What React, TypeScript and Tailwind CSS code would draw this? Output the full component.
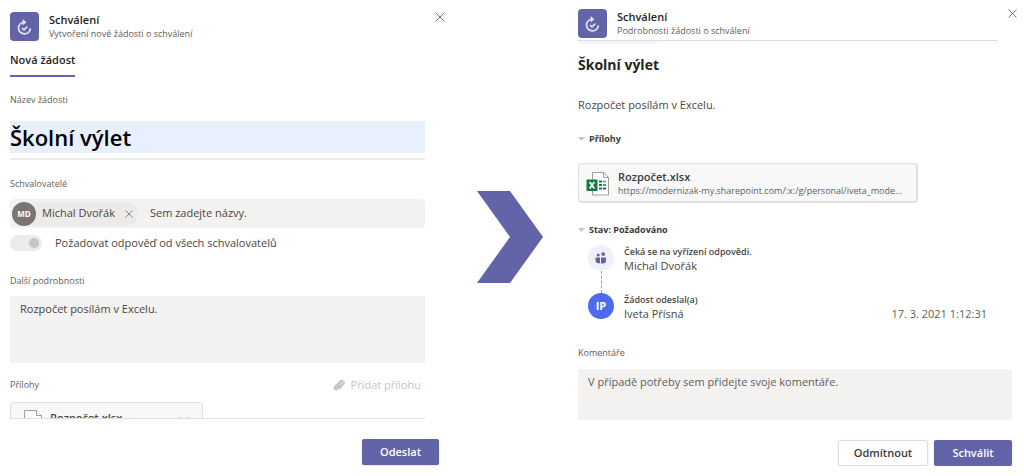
import React, { useState } from 'react';

const LogoIcon: React.FC = () => (
  <span className="flex h-[29px] w-[29px] shrink-0 items-center justify-center rounded-sm bg-[#6264a7]">
    <svg width="16" height="18" viewBox="0 0 16 18" fill="none" stroke="#e2e2f6" strokeWidth="1.7">
      <path d="M7.2 4.4C4 4.4 1.5 6.8 1.5 10c0 3.3 2.6 5.9 5.9 5.9 3.2 0 5.7-2.4 6-5.5" />
      <path d="M5.6 1 9.4 4.3 5.6 7.4z" fill="#e2e2f6" stroke="none" />
      <path d="m5 10 2 1.900 3.400-3.300" strokeWidth="1.5" />
    </svg>
  </span>
);

const CloseIcon: React.FC<{ size: number }> = ({ size }) => (
  <svg width={size} height={size} viewBox="0 0 10 10" stroke="#605e5c" strokeWidth="0.9">
    <path d="M0.5 0.5 9.5 9.5M9.5 0.5 0.5 9.5" />
  </svg>
);

const ExcelIcon: React.FC = () => (
  <svg width="24" height="24" viewBox="0 0 24 24" className="shrink-0">
    <path d="M6.5 0.5h11l5 5v17.5h-16z" fill="#fff" stroke="#a19f9d" />
    <path d="M17.5 0.5v5h5" fill="none" stroke="#a19f9d" />
    <path d="M13 9.5h3M13 13h3M13 16.5h3" stroke="#107c41" strokeWidth="1.8" />
    <path d="M17 9.5h3" stroke="#33c481" strokeWidth="1.8" />
    <path d="M17 13h3" stroke="#21a366" strokeWidth="1.8" />
    <path d="M17 16.5h3" stroke="#185c37" strokeWidth="1.8" />
    <rect x="0.5" y="7.5" width="11" height="11.5" rx="0.8" fill="#107c41" />
    <path d="m3.7 10 4.6 6.5M8.3 10l-4.6 6.5" stroke="#fff" strokeWidth="1.7" />
  </svg>
);

const FileIcon: React.FC = () => (
  <svg width="18" height="22" viewBox="0 0 18 22" fill="#fff" stroke="#a19f9d" className="shrink-0">
    <path d="M0.5 0.5h12l5 5v16h-17z" />
    <path d="M12.5 0.5v5h5" />
  </svg>
);

const ClipIcon: React.FC = () => (
  <svg width="12" height="12" viewBox="0 0 12 12" fill="none" stroke="#c8c6c4" strokeLinecap="round">
    <path d="M3.2 8.8 7.8 4.2" strokeWidth="5" />
    <path d="M2.5 7.5 7.5 2a2.2 2.2 0 0 1 3.2 3L6 10" strokeWidth="1.2" />
    <path d="m7 5.5 1.7-1.9" stroke="#fff" strokeWidth="0.9" />
  </svg>
);

const PeopleIcon: React.FC = () => (
  <svg width="12" height="12" viewBox="0 0 12 12" fill="#6264a7">
    <circle cx="3.2" cy="2.9" r="1.5" />
    <circle cx="8.2" cy="2.1" r="1.9" />
    <path d="M0.5 5.4h4.5v5.9H3.5a3 3 0 0 1-3-3z" />
    <path d="M6 5.4h5v3a3 3 0 0 1-3 3H6z" />
  </svg>
);

interface HeaderProps {
  title: string;
  subtitle: string;
}

const Header: React.FC<HeaderProps> = ({ title, subtitle }) => (
  <header className="flex gap-[10px]">
    <LogoIcon />
    <div>
      <h1 className="text-[11px] leading-[15px] font-semibold text-[#252423]">{title}</h1>
      <p className="text-[9px] leading-[14px] text-[#605e5c]">{subtitle}</p>
    </div>
  </header>
);

const RequestForm: React.FC = () => {
  const [name, setName] = useState('Školní výlet');
  const [details, setDetails] = useState('Rozpočet posílám v Excelu.');
  const [approver, setApprover] = useState('');
  const [requireAll, setRequireAll] = useState(true);

  return (
    <section className="pt-3 pl-[10px]">
      <div className="flex items-start justify-between">
        <Header title="Schválení" subtitle="Vytvoření nové žádosti o schválení" />
        <button type="button" aria-label="Zavřít">
          <CloseIcon size={10} />
        </button>
      </div>

      <div className="mr-5">
        <nav className="mt-[11px] flex">
          <a href="#nova" className="border-b-2 border-[#6264a7] pb-2 text-[11px] leading-[15px] font-semibold text-[#252423]">
            Nová žádost
          </a>
        </nav>

        <label htmlFor="name" className="mt-4 block text-[9px] leading-[14px] text-[#605e5c]">
          Název žádosti
        </label>
        <div className="mt-[14px] border-b-2 border-[#edebe9] pb-[5px]">
          <input
            id="name"
            value={name}
            onChange={(e) => setName(e.target.value)}
            className="block h-8 w-full bg-[#e8f0fe] text-[22px] font-semibold text-black outline-none"
          />
        </div>

        <label htmlFor="approvers" className="mt-[17px] block text-[9px] leading-[14px] text-[#605e5c]">
          Schvalovatelé
        </label>
        <div className="mt-2 flex h-[29px] items-center rounded-sm bg-[#f3f2f1]">
          <div className="ml-[2px] flex h-6 items-center rounded-full bg-[#edebe9] pr-[5px]">
            <span className="flex h-6 w-6 items-center justify-center rounded-full bg-[#7a7574] text-[8px] font-bold text-white">
              MD
            </span>
            <span className="ml-[6px] text-[11px] text-[#484644]">Michal Dvořák</span>
            <button type="button" aria-label="Odebrat" className="ml-[10px]">
              <CloseIcon size={8} />
            </button>
          </div>
          <input
            id="approvers"
            value={approver}
            onChange={(e) => setApprover(e.target.value)}
            placeholder="Sem zadejte názvy."
            className="ml-3 min-w-0 flex-1 text-[11px] outline-none placeholder:text-[#484644]"
          />
        </div>

        <label className="mt-[7px] flex h-4 items-center gap-[13px] text-[11px] text-[#484644]">
          <input
            type="checkbox"
            checked={requireAll}
            onChange={(e) => setRequireAll(e.target.checked)}
            className="h-4 w-8 appearance-none rounded-full bg-[#edebe9] p-[3px] before:block before:h-[10px] before:w-[10px] before:rounded-full before:bg-[#c8c6c4] checked:before:ml-auto"
          />
          Požadovat odpověď od všech schvalovatelů
        </label>

        <label htmlFor="details" className="mt-[23px] block text-[9px] leading-[14px] text-[#605e5c]">
          Další podrobnosti
        </label>
        <textarea
          id="details"
          value={details}
          onChange={(e) => setDetails(e.target.value)}
          className="mt-2 block h-[67px] w-full resize-none bg-[#f3f2f1] px-[10px] py-[5px] text-[11px] leading-[15px] text-[#484644] outline-none"
        />

        <div className="mt-[14px] flex items-center justify-between pr-1">
          <span className="text-[9px] leading-[14px] text-[#605e5c]">Přílohy</span>
          <button type="button" className="flex items-center gap-[6px] text-[11px] leading-4 text-[#c8c6c4]">
            <ClipIcon />
            Přidat přílohu
          </button>
        </div>

        {/* the scrolled list is cut off by the footer line */}
        <div className="mt-[9px] h-[17px] overflow-hidden border-b border-[#e1dfdd]">
          <div className="flex w-[193px] items-start rounded-sm border border-[#e1dfdd] bg-[#f8f8f8] px-[13px] pt-[7px] pb-4">
            <FileIcon />
            <span className="ml-2 text-[11px] leading-[15px] font-semibold text-[#484644]">Rozpočet.xlsx</span>
            <button type="button" aria-label="Odebrat přílohu" className="mt-[7px] ml-auto">
              <CloseIcon size={10} />
            </button>
          </div>
        </div>
      </div>

      <div className="mt-5 mr-[6px] flex justify-end">
        <button type="button" className="h-[26px] w-[77px] rounded-xs bg-[#6264a7] text-[11px] font-semibold text-white shadow">
          Odeslat
        </button>
      </div>
    </section>
  );
};

const SectionTitle: React.FC<{ text: string }> = ({ text }) => (
  <h3 className="flex items-center gap-1 text-[9px] leading-[14px] font-bold text-[#3b3a39]">
    <svg width="7" height="4" viewBox="0 0 7 4" fill="#c8c6c4">
      <path d="M0 0h7L3.5 4z" />
    </svg>
    {text}
  </h3>
);

const RequestDetails: React.FC = () => {
  const [comment, setComment] = useState('');

  return (
    <section className="pt-[9px] pr-3">
      <div className="-mr-[5px] flex items-start justify-between">
        <Header title="Schválení" subtitle="Podrobnosti žádosti o schválení" />
        <button type="button" aria-label="Zavřít">
          <CloseIcon size={9} />
        </button>
      </div>

      <div className="mt-[2px] mr-[14px] border-t border-[#e1dfdd]">
        <div className="h-[3px] w-20 rounded-b-lg bg-[#f4f4fc]" />
      </div>

      <h2 className="mt-[11px] text-[14px] leading-5 font-bold text-[#252423]">Školní výlet</h2>
      <p className="mt-[22px] text-[11px] leading-[15px] text-[#484644]">Rozpočet posílám v Excelu.</p>

      <div className="mt-5">
        <SectionTitle text="Přílohy" />
      </div>
      <a
        href="#rozpocet"
        className="mt-[17px] mr-[94px] flex h-10 items-center gap-2 rounded-sm border border-r-2 border-b-2 border-[#e1dfdd] bg-[#f8f8f8] pt-[2px] pr-2 pl-[7px]"
      >
        <ExcelIcon />
        <span className="min-w-0">
          <span className="block text-[11px] leading-[15px] font-semibold text-[#3b3a39]">Rozpočet.xlsx</span>
          <span className="block text-[9px] leading-[14px] whitespace-nowrap text-[#605e5c]">
            https://modernizak-my.sharepoint.com/:x:/g/personal/iveta_mode...
          </span>
        </span>
      </a>

      <div className="mt-5">
        <SectionTitle text="Stav: Požadováno" />
      </div>

      <ol className="mt-2 mr-[25px] ml-[10px] text-[11px] text-[#484644]">
        <li className="flex gap-[10px]">
          <div className="flex flex-col items-center">
            <span className="flex h-[26px] w-[26px] items-center justify-center rounded-full bg-[#f0f0fb]">
              <PeopleIcon />
            </span>
            <span className="h-[22px] border-l border-dashed border-[#a19f9d]" />
          </div>
          <div>
            <p className="text-[9px] leading-[14px] font-semibold">Čeká se na vyřízení odpovědi.</p>
            <p className="leading-[14px]">Michal Dvořák</p>
          </div>
        </li>
        <li className="flex gap-[10px]">
          <span className="flex h-[26px] w-[26px] items-center justify-center rounded-full bg-[#4f6bed] font-bold text-white">
            IP
          </span>
          <div className="flex-1">
            <p className="text-[9px] leading-[14px] font-semibold">Žádost odeslal(a)</p>
            <p className="flex justify-between leading-[14px]">
              <span>Iveta Přísná</span>
              <time className="text-[#605e5c]">17. 3. 2021 1:12:31</time>
            </p>
          </div>
        </li>
      </ol>

      <label htmlFor="comment" className="mt-[25px] block text-[9px] leading-[14px] text-[#605e5c]">
        Komentáře
      </label>
      <textarea
        id="comment"
        value={comment}
        onChange={(e) => setComment(e.target.value)}
        placeholder="V případě potřeby sem přidejte svoje komentáře."
        className="mt-[9px] block h-[51px] w-full resize-none bg-[#f3f2f1] px-[10px] py-[5px] text-[11px] leading-[15px] outline-none placeholder:text-[#605e5c]"
      />

      <div className="mt-5 flex justify-end gap-[6px]">
        <button type="button" className="h-[26px] w-[90px] rounded-xs border border-[#e1dfdd] bg-white text-[11px] font-semibold text-[#3b3a39] shadow">
          Odmítnout
        </button>
        <button type="button" className="h-[26px] w-[78px] rounded-xs bg-[#6264a7] text-[11px] font-semibold text-white shadow">
          Schválit
        </button>
      </div>
    </section>
  );
};

const App: React.FC = () => {
  return (
    <main className="grid grid-cols-[minmax(0,445fr)_minmax(0,133fr)_minmax(0,446fr)] bg-white font-['Open_Sans','Noto_Sans',sans-serif]">
      <RequestForm />
      <div className="flex items-center pt-2 pl-8">
        <svg width="66" height="94" viewBox="0 0 66 94" fill="#6264a7" aria-hidden="true">
          <path d="M0 1h33l33 46-33 46H0l33-46z" />
        </svg>
      </div>
      <RequestDetails />
    </main>
  );
};

export default App;
